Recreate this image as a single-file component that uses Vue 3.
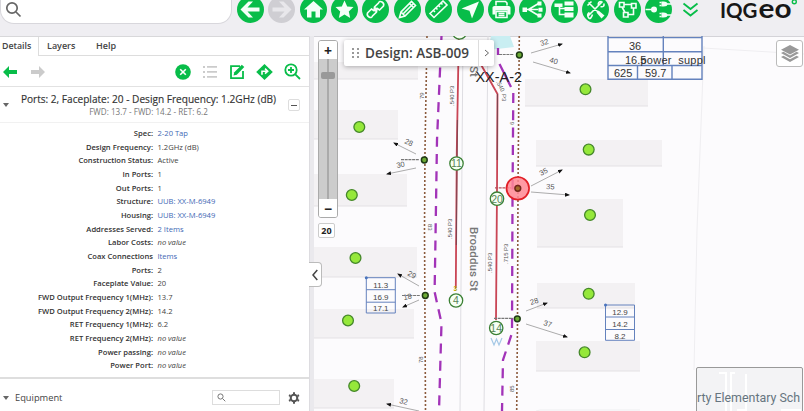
<template>
  <div class="app">
    <!-- Top bar -->
    <header class="topbar">
      <div class="search">
        <svg width="18" height="18" viewBox="0 0 18 18"><circle cx="7" cy="7" r="5.2" /><path d="M11 11l4.5 4.5" /></svg>
      </div>
      <nav class="tools">
        <button v-for="tool in tools" :key="tool.name" class="tool" :class="{ disabled: tool.disabled }">
          <svg width="27" height="27" viewBox="-13.5 -13.5 27 27">
            <path v-if="tool.fill" class="solid" :d="tool.fill" />
            <path v-if="tool.line" class="line" :d="tool.line" />
          </svg>
        </button>
      </nav>
      <svg class="more" width="18" height="18" viewBox="0 0 18 18"><path d="M1.5 2.5l7 5.5 7-5.5M1.5 9l7 5.5 7-5.5" /></svg>
      <svg class="logo" width="84" height="30" viewBox="0 0 84 30">
        <text x="0" y="17.5" textLength="37.5" lengthAdjust="spacingAndGlyphs">IQG</text>
        <text class="tall" x="38.5" y="17.5" textLength="33" lengthAdjust="spacingAndGlyphs">eo</text>
        <circle cx="74.3" cy="1.8" r="2" />
      </svg>
    </header>

    <main class="content">
      <!-- Details panel -->
      <aside class="panel">
        <div class="tabs">
          <span class="tab active">Details</span>
          <span class="tab">Layers</span>
          <span class="tab">Help</span>
          <span class="tab-rest"></span>
        </div>
        <div class="actions">
          <svg class="green" width="14" height="14" viewBox="0 0 14 14"><path d="M0 7l6-6v4h8v4H6v4z" /></svg>
          <svg class="gray next" width="14" height="14" viewBox="0 0 14 14"><path d="M14 7L8 1v4H0v4h8v4z" /></svg>
          <svg class="green" width="16" height="16" viewBox="0 0 16 16"><circle cx="8" cy="8" r="7.8" /><path class="w" d="M5.2 5.2l5.6 5.6M10.8 5.2l-5.6 5.6" /></svg>
          <svg class="gray" width="16" height="16" viewBox="0 0 16 16"><path d="M1 2h2v2H1zM5 2h10v1.7H5zM1 7h2v2H1zM5 7h10v1.7H5zM1 12h2v2H1zM5 12h10v1.7H5z" /></svg>
          <svg class="green" width="16" height="16" viewBox="0 0 16 16"><path class="g" d="M11 2.2H2v12h12V7" /><path d="M4.5 11.5l.8-3.3 7.5-7.5 2.5 2.4-7.5 7.6z" /></svg>
          <svg class="green" width="17" height="16" viewBox="0 0 17 16"><path d="M8.5 0l8.3 8-8.3 8L.2 8z" /><path class="w" d="M6 10.7V7.2h5M9 4.7l2.7 2.5L9 9.7" /></svg>
          <svg class="green" width="17" height="17" viewBox="0 0 17 17"><circle class="g" cx="7" cy="7" r="5.7" /><path class="g" d="M11.3 11.3l4.7 4.7M7 4v6M4 7h6" /></svg>
        </div>
        <div class="feature">
          <i class="caret"></i>
          <div class="titles">
            <div class="title">Ports: 2, Faceplate: 20 - Design Frequency: 1.2GHz (dB)</div>
            <div class="subtitle">FWD: 13.7 - FWD: 14.2 - RET: 6.2</div>
          </div>
          <button class="collapse"><i></i></button>
        </div>
        <dl class="fields">
          <template v-for="field in fields" :key="field.label">
            <dt>{{ field.label }}</dt>
            <dd :class="field.type">{{ field.value }}</dd>
          </template>
        </dl>
        <div class="equipment">
          <i class="caret"></i>
          <span class="eq-name">Equipment</span>
          <div class="eq-search">
            <svg width="9" height="9" viewBox="0 0 9 9"><circle cx="3.5" cy="3.5" r="2.6" /><path d="M5.5 5.5L8.3 8.3" /></svg>
          </div>
          <svg class="gear" width="12" height="12" viewBox="-6 -6 12 12">
            <circle r="3.3" />
            <path d="M0-5.7V-4M0 5.7V4M-5-2.8L-3.5-2M5 2.8L3.5 2M-5 2.8L-3.5 2M5-2.8L3.5-2" />
          </svg>
        </div>
      </aside>

      <!-- Map -->
      <section class="map">
        <svg class="canvas" width="490" height="375" viewBox="314 36 490 375">
          <defs>
            <marker id="arrow" viewBox="0 0 5 4" refX="4" refY="2" markerWidth="5" markerHeight="4" markerUnits="userSpaceOnUse" orient="auto">
              <path d="M0 0l5 2-5 2z" fill="#111" />
            </marker>
          </defs>

          <g v-for="(b, i) in buildings" :key="'b' + i">
            <rect class="building" :x="b[0]" :y="b[1]" :width="b[2]" :height="b[3]" />
            <path class="edge" :d="`M${b[0]} ${b[1] + b[3]}h${b[2]}`" />
          </g>
          <path class="road" d="M463 36L460 411M488 36L484 411" />
          <path class="road faint" d="M704 46L697 230 694 370M703 48l101 6M536 411l4-1h100" />
          <path class="water" d="M491 36h19l4 11-26 3z" />

          <!-- Cables -->
          <path class="dotted" d="M427 36L425 150 424.5 230 425.5 411" />
          <path class="dotted" d="M519.3 36L518 190 517.5 320 516.7 411" />
          <path class="duct" d="M441.5 36L437 140 435.3 250 434.6 292 441.5 323 439 411" stroke-dashoffset="3" />
          <path class="duct solid" d="M498 48v7M499.5 64L511 87" />
          <path class="duct" d="M513.3 93L512.5 200 512 333 503 360 502 411" />
          <path class="coax" d="M458.8 36L456.8 150 455.8 288M476 54l3 7L497.5 94 497 190 496 320" />
          <path class="core" d="M457.4 120L456.3 245M497.5 94L497.2 160" />

          <!-- Street and cable labels -->
          <text class="street" transform="translate(469.5 227) rotate(90)" textLength="64">Broaddus St</text>
          <text class="street" transform="translate(470 66) rotate(90)">St</text>
          <text v-for="(l, i) in cableLabels" :key="'c' + i" class="cable" :transform="`translate(${l.x} ${l.y}) rotate(${l.r})`">{{ l.text }}</text>

          <!-- Drops -->
          <g v-for="(d, i) in drops" :key="'d' + i">
            <path class="drop" :d="d.path" marker-end="url(#arrow)" />
            <text class="drop-label" :transform="`translate(${d.x} ${d.y}) rotate(${d.r})`">{{ d.text }}</text>
          </g>

          <circle v-for="(h, i) in houses" :key="'h' + i" class="house" :cx="h[0]" :cy="h[1]" r="5.4" />

          <!-- Taps -->
          <path class="lead" d="M401 159.7h18M402 295.5h18M494 318.3h19M499 54.5h15" />
          <path class="lead red" d="M495 187.8h16" />
          <circle class="selected" cx="517.8" cy="188.3" r="11.3" />
          <circle v-for="(t, i) in taps" :key="'t' + i" class="tap" :class="{ picked: t[2] }" :cx="t[0]" :cy="t[1]" r="2.9" />
          <g v-for="a in amps" :key="a.text + a.y">
            <circle class="amp" :cx="a.x" :cy="a.y" r="6.7" />
            <text class="amp-label" :x="a.x" :y="a.y + 3.8">{{ a.text }}</text>
          </g>
          <text class="three" x="453.5" y="291">3</text>
          <path class="ground" d="M491 338l3 7 2.5-6 2.5 6 3-7" />
          <text class="node-name" x="475.5" y="82.3" textLength="46.5" lengthAdjust="spacingAndGlyphs">XX-A-2</text>

          <!-- Level boxes -->
          <path class="grid bold" d="M608 36V79.3H702V36M608 37.6H702M608 51.7H702M608 65.5H702M663.3 36V65.5M637.5 65.5V79.3M672 65.5V79.3" />
          <g class="big-levels">
            <text x="629" y="50">36</text>
            <text x="625" y="63.5">16.5</text>
            <text x="640.5" y="63.5" textLength="65">power&#160; suppl</text>
            <text x="614" y="77">625</text>
            <text x="645" y="77">59.7</text>
          </g>
          <g v-for="g in levels" :key="g.x">
            <path class="grid" :d="`M${g.x} ${g.y}h29v35.3h-29zM${g.x} ${g.y + 12}h29M${g.x} ${g.y + 24.5}h29`" />
            <circle class="grid-pin" :cx="g.x" :cy="g.y" r="1.5" />
            <text v-for="(v, i) in g.values" :key="v" class="level" :x="g.x + 14.5" :y="g.y + 10 + i * 11.8">{{ v }}</text>
          </g>
        </svg>

        <!-- Map controls -->
        <div class="zoom">
          <button class="zoom-btn">+</button>
          <div class="track"><i></i></div>
          <button class="zoom-btn">−</button>
        </div>
        <div class="zoom-level">20</div>
        <button class="hide-panel"><svg width="8" height="12" viewBox="0 0 8 12"><path d="M6.3 1L2 6l4.3 5" /></svg></button>
        <div class="design">
          <svg width="8" height="10" viewBox="0 0 8 10"><path d="M0 0h2v2H0zM5 0h2v2H5zM0 4h2v2H0zM5 4h2v2H5zM0 8h2v2H0zM5 8h2v2H5z" /></svg>
          <span class="design-name">Design: ASB-009</span>
          <span class="design-next"><svg width="6" height="8" viewBox="0 0 6 8"><path d="M1 1l3.5 3L1 7" /></svg></span>
        </div>
        <button class="layers">
          <svg width="20" height="19" viewBox="0 0 20 19">
            <path d="M10 1l9 4.7-9 4.7-9-4.7zM1 9l2.5-1.2L10 11.5l6.5-3.7L19 9l-9 5zM1 13l2.5-1.2L10 15.3l6.5-3.5L19 13l-9 5z" />
          </svg>
        </button>
        <div class="overview">
          <svg width="106" height="43" viewBox="0 0 106 43"><path d="M22 4h7v39M34 43V4h4M49 5v35M40 41h10M84 41h20" /></svg>
          <span>rty Elementary Sch</span>
        </div>
      </section>
    </main>
  </div>
</template>

<script setup>
// Toolbar glyphs, drawn around the centre of each button
const tools = [
  { name: 'back', fill: 'M-10 0L-2-8H2.5L-3-2H9V2H-3L2.5 8H-2z' },
  { name: 'forward', disabled: true, fill: 'M10 0L2-8H-2.5L3-2H-9V2H3L-2.5 8H2z' },
  { name: 'home', fill: 'M0-8.5L9.5 0H6.5V8H2V2H-2V8H-6.5V0H-9.5z' },
  { name: 'bookmark', fill: 'M0-9L2.7-3 9-2.5 4.3 2 5.7 8.5 0 5-5.7 8.5-4.3 2-9-2.5-2.7-3z' },
  { name: 'link', line: 'M-1 1.5L-4-.5-8 3.5Q-9 6-6.5 7.5T-3 6.5L1 2.5Q2-.5-1-2M1-1.5L4 .5 8-3.5Q9-6 6.5-7.5T3-6.5L-1-2.5Q-2 .5 1 2' },
  { name: 'edit', line: 'M-8 8L-6.5 2.5 4-8 8-4-2.5 6.5zM-6.5 2.5L-2.5 6.5M-4.5 4.5L6-6M2-6L6-2' },
  { name: 'measure', line: 'M-8.5 4L4.5-8.5 8.5-4.5-4.5 8zM-5 1l1.5 1.5M-2.5-1.5L-1 0M0-4l1.5 1.5M2.5-6.5L4-5' },
  { name: 'locate', fill: 'M8.5-8L1.5 9-1 1.3-9-1z' },
  { name: 'print', fill: 'M-9-2Q-9-3.5-7-3.5H7Q9-3.5 9-2V5H6V1H-6V5H-9z', line: 'M-5.5-4V-8H4L5.5-6.5V-4M-5.5 2H5.5V8H-5.5zM-3 4H3M-3 6H3' },
  { name: 'splice', fill: 'M-10-2h4.5v4.5h-4.5zM5-8h4v4H5zM6-1.8h4v4H6zM5 4h4v4H5z', line: 'M-6 0H6M-4 0L6-6M-4 0L6 6' },
  { name: 'equipment', fill: 'M-10-6h8v3.5h-8zM0-8h9v4H0zM0-2.5h9v4H0zM0 3h9v5H0z', line: 'M-5-3V5H1M-5-1H1' },
  { name: 'repair', line: 'M-7-7L7 7M-8-4L-4-8M7-8L-7 6M3-4Q2-8 6-8M5-3Q9-2 8.5-6M-6 3Q-9 5-7 8T-3 5', fill: 'M3 1L9 6 6 9 1 3z' },
  { name: 'trace', line: 'M-8-7H-3.5V-2.5H-8zM4-6H8.5V-1.5H4zM-4 3H.5V7.5H-4zM-3.5-5H4M-5.5-2.5L-2.5 3M.5 5H6V-1.5' },
  { name: 'plug', fill: 'M-7.5 0a3 3 0 0 1 6 0a3 3 0 0 1-6 0M3-8h2q4 0 4 2.5T5-3H3zM3 3h2q4 0 4 2.5T5 8H3z', line: 'M-13 0H-6M1-7H3M1-4H3M1 4H3M1 7H3M8-5.5h5M8 5.5h5' }
]

const fields = [
  { label: 'Spec:', value: '2-20 Tap', type: 'link' },
  { label: 'Design Frequency:', value: '1.2GHz (dB)' },
  { label: 'Construction Status:', value: 'Active' },
  { label: 'In Ports:', value: '1' },
  { label: 'Out Ports:', value: '1' },
  { label: 'Structure:', value: 'UUB: XX-M-6949', type: 'link' },
  { label: 'Housing:', value: 'UUB: XX-M-6949', type: 'link' },
  { label: 'Addresses Served:', value: '2 Items', type: 'link' },
  { label: 'Labor Costs:', value: 'no value', type: 'empty' },
  { label: 'Coax Connections', value: 'Items', type: 'link' },
  { label: 'Ports:', value: '2' },
  { label: 'Faceplate Value:', value: '20' },
  { label: 'FWD Output Frequency 1(MHz):', value: '13.7' },
  { label: 'FWD Output Frequency 2(MHz):', value: '14.2' },
  { label: 'RET Frequency 1(MHz):', value: '6.2' },
  { label: 'RET Frequency 2(MHz):', value: 'no value', type: 'empty' },
  { label: 'Power passing:', value: 'no value', type: 'empty' },
  { label: 'Power Port:', value: 'no value', type: 'empty' }
]

// x, y, width, height
const buildings = [
  [314, 62, 104, 17], [314, 110, 84, 29], [314, 174, 93, 32], [314, 247, 103, 30], [314, 309, 100, 29], [314, 379, 80, 29],
  [525, 79, 123, 27], [536, 140, 126, 26], [537, 199, 86, 48], [537, 283, 98, 25], [536, 341, 104, 30]
]

const houses = [
  [359.3, 127], [351.8, 195], [355.5, 258], [348, 320.5], [354.2, 386],
  [585.5, 89.3], [588.7, 149.6], [590, 215], [588.7, 293.8], [584.6, 352.3]
]

const taps = [
  [424.3, 160], [425.3, 295.5], [519.4, 55], [517.3, 318.8], [517.8, 188.3, true]
]

const amps = [
  { x: 456.5, y: 163.5, text: '11' },
  { x: 456, y: 300.5, text: '4' },
  { x: 497, y: 198.7, text: '20' },
  { x: 496.2, y: 328, text: '14' },
  { x: 459.5, y: 32.5, text: '' }
]

const cableLabels = [
  { x: 453.5, y: 106, r: -90, text: '.540 P3' },
  { x: 452, y: 239, r: -90, text: '.540 P3' },
  { x: 492, y: 273, r: -90, text: '.540 P3' },
  { x: 508, y: 264, r: -90, text: '.715 P3' },
  { x: 496, y: 82, r: 62, text: '.540' },
  { x: 501.5, y: 94, r: 90, text: 'P3' },
  { x: 423.5, y: 99, r: -90, text: '79' },
  { x: 427.5, y: 224, r: 90, text: '83' },
  { x: 422.5, y: 363, r: -90, text: '78' },
  { x: 514, y: 125, r: -90, text: '6' },
  { x: 514, y: 392, r: -90, text: '85' }
]

const drops = [
  { path: 'M416 154L394 143', x: 404, y: 143, r: 24, text: '28' },
  { path: 'M416 168L387 174', x: 397, y: 168, r: -12, text: '30' },
  { path: 'M419 286L398 274', x: 407, y: 275, r: 27, text: '29' },
  { path: 'M419 300L403 307', x: 404, y: 300, r: -12, text: '18' },
  { path: 'M419 411L387 404', x: 399, y: 403, r: 13, text: '32' },
  { path: 'M531 53L562 44', x: 541, y: 46, r: -16, text: '32' },
  { path: 'M533 62L570 73', x: 549, y: 62, r: 17, text: '40' },
  { path: 'M531 186L562 170', x: 541, y: 176, r: -28, text: '35' },
  { path: 'M531 192L569 195', x: 546, y: 189, r: 3, text: '35' },
  { path: 'M526 311L547 303', x: 531, y: 305, r: -18, text: '28' },
  { path: 'M526 324L567 337', x: 543, y: 325, r: 17, text: '37' }
]

const levels = [
  { x: 366.3, y: 277.7, values: ['11.3', '16.9', '17.1'] },
  { x: 605.5, y: 305, values: ['12.9', '14.2', '8.2'] }
]
</script>

<style>
body {
  margin: 0;
  overflow: hidden;
}
</style>

<style scoped>
.app {
  width: 804px;
  height: 411px;
  display: flex;
  flex-direction: column;
  overflow: hidden;
  background: #eae9ed;
  color: #444;
  font-family: "Open Sans", "Noto Sans", sans-serif;
}

button {
  padding: 0;
  border: none;
  font-family: inherit;
}

svg {
  display: block;
  flex: none;
}

/* Top bar */
.topbar {
  height: 36px;
  flex: none;
  display: flex;
  align-items: flex-start;
  background: #efeef2;
}

.search {
  width: 232px;
  height: 24px;
  box-sizing: border-box;
  padding: 1px 0 0 4px;
  background: #fff;
  border: 1px solid #d8d7dc;
  border-top: none;
  border-radius: 0 0 14px 14px;
}

.search svg {
  fill: none;
  stroke: #666;
  stroke-width: 1.7;
}

.tools {
  display: flex;
  gap: 4.4px;
  margin: -4px 0 0 5px;
}

.tool {
  width: 27px;
  height: 27px;
  border-radius: 50%;
  background: #08bd49;
}

.tool.disabled {
  background: #cfced3;
}

.tool .solid {
  fill: #f4fff8;
}

.tool .line {
  fill: none;
  stroke: #f4fff8;
  stroke-width: 1.6;
}

.tool.disabled .solid {
  fill: #e8e7eb;
}

.more {
  margin: 1px 0 0 10px;
  fill: none;
  stroke: #08bd49;
  stroke-width: 1.8;
}

.logo {
  margin-left: 20px;
  overflow: visible;
}

.logo text {
  font-family: Lato, sans-serif;
  font-size: 20px;
  font-weight: 700;
  fill: #171717;
}

.logo .tall {
  font-size: 26px;
}

.logo circle {
  fill: none;
  stroke: #08bd49;
  stroke-width: 1.4;
}

.content {
  flex: 1;
  display: flex;
  gap: 4px;
  min-height: 0;
}

/* Details panel */
.panel {
  width: 310px;
  box-sizing: border-box;
  flex: none;
  display: flex;
  flex-direction: column;
  background: #fff;
  border-right: 1px solid #dddce0;
}

.tabs {
  height: 19px;
  flex: none;
  display: flex;
  font-size: 9px;
  font-weight: 600;
  line-height: 18px;
  border-top: 1px solid #d8d8da;
}

.tab {
  width: 49px;
  box-sizing: border-box;
  padding-left: 8px;
  border-bottom: 1px solid #ddd;
}

.tab.active {
  width: 39px;
  padding-left: 2px;
  border-right: 1px solid #ddd;
  border-bottom: none;
  font-size: 8.8px;
}

.tab-rest {
  flex: 1;
  border-bottom: 1px solid #ddd;
}

.actions {
  height: 31px;
  flex: none;
  display: flex;
  align-items: center;
  padding: 1px 8px 0 3px;
  box-sizing: border-box;
  gap: 11px;
  border-bottom: 1px solid #e2e2e2;
}

.actions .next {
  margin: 0 auto 0 3px;
}

.green {
  fill: #08bd49;
}

.gray {
  fill: #cbcbcb;
}

.w {
  fill: none;
  stroke: #fff;
  stroke-width: 1.6;
}

.g {
  fill: none;
  stroke: #08bd49;
  stroke-width: 1.8;
}

.feature {
  height: 34px;
  flex: none;
  display: flex;
  align-items: center;
  padding: 1px 9px 0 3px;
  border-bottom: 1px solid #f1f1f1;
}

.caret {
  flex: none;
  border: 3.5px solid transparent;
  border-top: 4px solid #666;
  border-bottom: none;
}

.titles {
  flex: 1;
  white-space: nowrap;
  text-align: center;
}

.title {
  font-size: 10.1px;
  line-height: 13px;
  color: #333;
  -webkit-text-stroke: 0.15px #333;
}

.subtitle {
  font-size: 8.1px;
  line-height: 12px;
  color: #777;
}

.collapse {
  width: 12px;
  height: 12px;
  box-sizing: border-box;
  display: flex;
  align-items: center;
  justify-content: center;
  background: #fff;
  border: 1px solid #ddd;
  border-radius: 2px;
}

.collapse i {
  width: 6px;
  height: 1px;
  background: #555;
}

.fields {
  height: 254px;
  flex: none;
  box-sizing: border-box;
  margin: 0;
  padding-top: 4px;
  display: grid;
  grid-template-columns: 153px 1fr;
  grid-auto-rows: 13.67px;
  align-content: start;
  column-gap: 4.5px;
  font-size: 7.6px;
  line-height: 13.67px;
  white-space: nowrap;
}

dt {
  text-align: right;
  font-weight: 600;
  color: #333;
}

dd {
  margin: 0;
}

dd.link {
  color: #4269b5;
}

dd.empty {
  font-style: italic;
}

.equipment {
  flex: 1;
  display: flex;
  align-items: center;
  padding: 5px 9px 0 3px;
  border-top: 2px solid #dedede;
}

.eq-name {
  margin: 0 auto 0 6px;
  font-size: 9.3px;
}

.eq-search {
  width: 68px;
  height: 15px;
  box-sizing: border-box;
  padding: 2px 4px;
  border: 1px solid #ddd;
}

.eq-search svg {
  fill: none;
  stroke: #777;
}

.gear {
  margin-left: 8px;
  fill: none;
  stroke: #555;
  stroke-width: 2;
}

/* Map */
.map {
  width: 490px;
  position: relative;
  background: #fcfbfd;
  box-shadow: inset 0 1px #d4d3d8;
}

.canvas text {
  font-family: "Liberation Sans", sans-serif;
}

.building {
  fill: #f3f1f3;
}

.edge {
  stroke: #e3e1e4;
}

.road {
  fill: none;
  stroke: #dedde2;
  stroke-width: 1;
}

.road.faint {
  stroke: #efeef1;
}

.water {
  fill: #c9eef2;
}

.dotted {
  fill: none;
  stroke: #8b5a3c;
  stroke-width: 1.6;
  stroke-dasharray: 2 2;
}

.duct {
  fill: none;
  stroke: #a233b8;
  stroke-width: 2.3;
  stroke-dasharray: 10 7.3;
}

.duct.solid {
  stroke-dasharray: none;
}

.coax {
  fill: none;
  stroke: #c94555;
  stroke-width: 1.8;
}

.core {
  fill: none;
  stroke: #7a4650;
  stroke-width: 1;
}

.canvas .street {
  font-family: Roboto, sans-serif;
  font-size: 11.5px;
  font-weight: 500;
  fill: #777;
}

.cable {
  font-size: 5.9px;
  fill: #555;
}

.drop {
  fill: none;
  stroke: #888;
  stroke-width: 0.7;
}

.drop-label {
  font-size: 7.5px;
  fill: #555;
}

.house {
  fill: #95e83a;
  stroke: #45882a;
  stroke-width: 1.3;
}

.lead {
  stroke: #777;
  stroke-width: 1.2;
  stroke-dasharray: 3 0.7;
}

.lead.red {
  stroke: #b8505a;
}

.selected {
  fill: #ff8793;
  fill-opacity: 0.85;
  stroke: #e21f26;
  stroke-width: 1.7;
}

.tap {
  fill: #6cab35;
  stroke: #1f3b16;
  stroke-width: 1.5;
}

.tap.picked {
  fill: #a26a28;
  stroke: #75261c;
}

.amp {
  fill: #f6fff4;
  stroke: #3b8034;
  stroke-width: 1.3;
}

.amp-label {
  font-size: 10.5px;
  text-anchor: middle;
  fill: #5a855a;
}

.three {
  font-size: 6.5px;
  font-weight: 700;
  fill: #b9a800;
}

.ground {
  fill: none;
  stroke: #a4c8e6;
  stroke-width: 1.2;
}

.node-name {
  font-size: 14.5px;
  fill: #222;
}

.grid {
  fill: none;
  stroke: #6482bd;
  stroke-width: 1;
}

.grid.bold {
  stroke-width: 1.4;
}

.grid-pin {
  fill: #4a74bd;
}

.level {
  font-size: 8px;
  text-anchor: middle;
  fill: #444;
}

.big-levels {
  font-size: 11px;
  fill: #333;
}

/* Controls that float over the map */
.zoom {
  position: absolute;
  left: 4px;
  top: 4px;
  width: 20px;
  height: 178px;
  box-sizing: border-box;
  display: flex;
  flex-direction: column;
  border: 1px solid #aaa;
  border-radius: 3px;
  overflow: hidden;
}

.zoom-btn {
  height: 18px;
  flex: none;
  background: #fff;
  color: #222;
  font-size: 14px;
  font-weight: 700;
  line-height: 17px;
}

.track {
  flex: 1;
  display: flex;
  justify-content: center;
  background: linear-gradient(90deg, #ccc 8px, #aaa 8px, #aaa 10px, #ccc 10px);
}

.track i {
  width: 14px;
  height: 7px;
  margin-top: 13px;
  border-radius: 2px;
  background: #999;
}

.zoom-level {
  position: absolute;
  left: 4px;
  top: 187px;
  width: 17px;
  height: 15px;
  box-sizing: border-box;
  border: 1px solid #ccc;
  border-radius: 2px;
  background: #fff;
  color: #222;
  font-size: 9px;
  font-weight: 700;
  line-height: 13px;
  text-align: center;
}

.hide-panel {
  position: absolute;
  left: -5px;
  top: 226px;
  width: 13px;
  height: 25px;
  box-sizing: border-box;
  display: flex;
  align-items: center;
  justify-content: center;
  background: #fff;
  border: 1px solid #bbb;
  border-left: none;
  border-radius: 0 4px 4px 0;
}

.hide-panel svg {
  fill: none;
  stroke: #444;
  stroke-width: 1.5;
}

.design {
  position: absolute;
  left: 30px;
  top: 4px;
  width: 150px;
  height: 26px;
  box-sizing: border-box;
  display: flex;
  align-items: center;
  padding-left: 8px;
  background: #fff;
  border-radius: 2px;
  box-shadow: 0 1px 5px rgba(0, 0, 0, 0.3);
  white-space: nowrap;
}

.design > svg {
  fill: #999;
}

.design-name {
  margin-left: 5px;
  font-size: 13.5px;
  font-weight: 600;
}

.design-next {
  align-self: stretch;
  margin-left: auto;
  width: 15px;
  display: flex;
  align-items: center;
  justify-content: center;
  border-left: 1px solid #ddd;
}

.design-next svg {
  fill: none;
  stroke: #666;
}

.layers {
  position: absolute;
  right: 1px;
  top: 4px;
  width: 27px;
  height: 27px;
  box-sizing: border-box;
  display: flex;
  align-items: center;
  justify-content: center;
  background: #fff;
  border: 1px solid #bbb;
  border-radius: 3px;
}

.layers svg {
  fill: #999;
}

.overview {
  position: absolute;
  right: 1px;
  bottom: -2px;
  width: 107px;
  height: 46px;
  box-sizing: border-box;
  display: flex;
  align-items: center;
  overflow: hidden;
  background: #f3f3f5;
  border: 1px solid #999;
  border-radius: 2px;
  color: #667580;
  font-family: Roboto, sans-serif;
  font-size: 12.4px;
  white-space: nowrap;
}

.overview svg {
  margin-right: -106px;
  fill: none;
  stroke: #fff;
  stroke-width: 2;
}

.overview span {
  padding-top: 15px;
}
</style>
